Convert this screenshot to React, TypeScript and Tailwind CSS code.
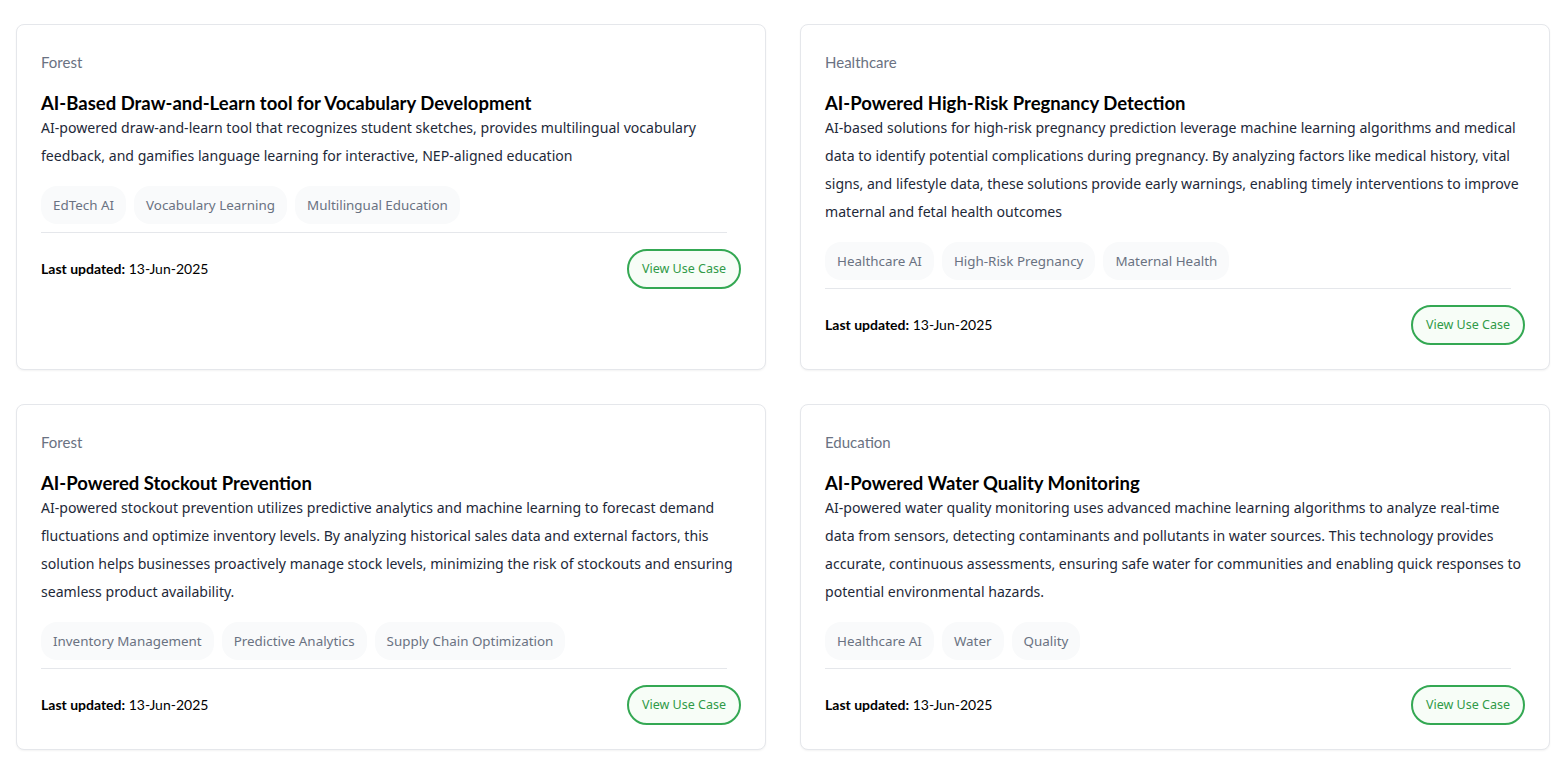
const cards = [
  {
    category: "Forest",
    title: "AI-Based Draw-and-Learn tool for Vocabulary Development",
    description:
      "AI-powered draw-and-learn tool that recognizes student sketches, provides multilingual vocabulary feedback, and gamifies language learning for interactive, NEP-aligned education",
    tags: ["EdTech AI", "Vocabulary Learning", "Multilingual Education"],
  },
  {
    category: "Healthcare",
    title: "AI-Powered High-Risk Pregnancy Detection",
    description:
      "AI-based solutions for high-risk pregnancy prediction leverage machine learning algorithms and medical data to identify potential complications during pregnancy. By analyzing factors like medical history, vital signs, and lifestyle data, these solutions provide early warnings, enabling timely interventions to improve maternal and fetal health outcomes",
    tags: ["Healthcare AI", "High-Risk Pregnancy", "Maternal Health"],
  },
  {
    category: "Forest",
    title: "AI-Powered Stockout Prevention",
    description:
      "AI-powered stockout prevention utilizes predictive analytics and machine learning to forecast demand fluctuations and optimize inventory levels. By analyzing historical sales data and external factors, this solution helps businesses proactively manage stock levels, minimizing the risk of stockouts and ensuring seamless product availability.",
    tags: ["Inventory Management", "Predictive Analytics", "Supply Chain Optimization"],
  },
  {
    category: "Education",
    title: "AI-Powered Water Quality Monitoring",
    description:
      "AI-powered water quality monitoring uses advanced machine learning algorithms to analyze real-time data from sensors, detecting contaminants and pollutants in water sources. This technology provides accurate, continuous assessments, ensuring safe water for communities and enabling quick responses to potential environmental hazards.",
    tags: ["Healthcare AI", "Water", "Quality"],
  },
];

function UseCaseCard({ card }: { card: (typeof cards)[number] }) {
  return (
    <div className="rounded-lg border border-gray-200 bg-white p-6 shadow-[0_1px_2px_rgba(0,0,0,0.05)]">
      <div className="text-[15px] leading-[26px] text-gray-500 font-['Lato',sans-serif]">
        {card.category}
      </div>
      <h3 className="mt-4 text-[18.5px] leading-6 font-bold text-black font-['Lato',sans-serif]">
        {card.title}
      </h3>
      <p className="-mt-px text-[14.1px] leading-7 text-gray-800 font-['Noto_Sans',sans-serif]">
        {card.description}
      </p>
      <div className="mt-4 flex flex-wrap gap-2">
        {card.tags.map((tag) => (
          <span
            key={tag}
            className="h-[38px] flex items-center rounded-2xl bg-gray-50 px-3 text-[13.4px] text-gray-500 font-['Noto_Sans',sans-serif]"
          >
            {tag}
          </span>
        ))}
      </div>
      <div className="mt-2 w-[98%] border-t border-gray-200" />
      <div className="mt-4 flex items-center justify-between font-['Lato',sans-serif]">
        <div className="text-sm text-black">
          <span className="font-bold">Last updated:</span> 13-Jun-2025
        </div>
        <button className="h-10 rounded-full border-2 border-[#34a853] bg-[#f7fdf7] px-[13px] text-[12.5px] text-[#2f9a47] font-['Noto_Sans',sans-serif]">
          View Use Case
        </button>
      </div>
    </div>
  );
}

export default function App() {
  return (
    <div className="min-h-screen bg-white pl-4 pr-[17px] pt-6 pb-6">
      <div className="grid grid-cols-2 gap-[34px]">
        {cards.map((card, i) => (
          <UseCaseCard key={i} card={card} />
        ))}
      </div>
    </div>
  );
}
